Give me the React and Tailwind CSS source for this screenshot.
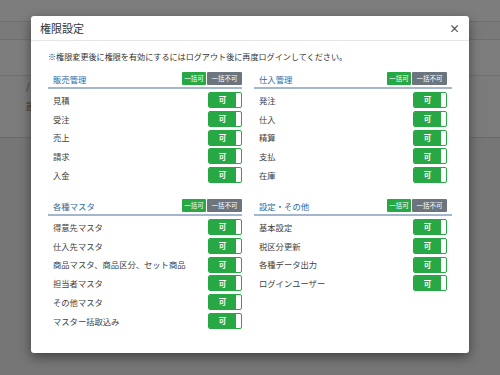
import React from "react";

const font = {fontFamily: '"Noto Sans CJK JP", "Noto Sans", sans-serif'};

const sections = [
	{title: "販売管理", items: ["見積", "受注", "売上", "請求", "入金"]},
	{title: "仕入管理", items: ["発注", "仕入", "精算", "支払", "在庫"]},
	{
		title: "各種マスタ",
		items: [
			"得意先マスタ",
			"仕入先マスタ",
			"商品マスタ、商品区分、セット商品",
			"担当者マスタ",
			"その他マスタ",
			"マスター括取込み",
		],
	},
	{title: "設定・その他", items: ["基本設定", "税区分更新", "各種データ出力", "ログインユーザー"]},
];

function Toggle() {
	return (
		<div className="flex h-[16px] w-[34px] overflow-hidden rounded-[2px] border border-[#28a745] bg-white">
			<div className="flex flex-1 items-center justify-center bg-[#28a745] text-[7.5px] font-bold leading-none text-white">
				可
			</div>
			<div className="w-[5px]" />
		</div>
	);
}

function Section({title, items, right}) {
	return (
		<div className="flex flex-col">
			<div className={`flex h-[17px] items-start justify-between border-b-2 border-[#a3b6cb] pl-[5px] ${right ? "pr-[5px]" : ""}`}>
				<span className="mt-[1px] text-[8.4px] leading-[13px] text-[#2f68a4]">{title}</span>
				<div className="flex gap-[1px]">
					<span className="flex h-[13px] w-[24px] items-center justify-center rounded-[1px] bg-[#28a745] text-[6.5px] leading-none text-white">
						一括可
					</span>
					<span className="flex h-[13px] w-[35px] items-center justify-center rounded-[1px] bg-[#6c757d] text-[6.5px] leading-none text-white">
						一括不可
					</span>
				</div>
			</div>
			<div className={`mt-[3px] flex flex-col gap-[2.75px] pl-[5px] ${right ? "pr-[5px]" : ""}`}>
				{items.map((item) => (
					<div key={item} className="flex h-[16px] items-center justify-between">
						<span className="text-[8.3px] leading-none text-[#404040]">{item}</span>
						<Toggle />
					</div>
				))}
			</div>
		</div>
	);
}

export default function App() {
	return (
		<div className="relative h-[375px] w-[500px] overflow-hidden bg-[#767676]" style={font}>
			{/* page behind the overlay */}
			<div className="flex flex-col">
				<div className="h-[22px] border-b border-[#6e6e6e] bg-[#7d7d7d]" />
				<div className="h-[18px] border-b border-[#6e6e6e] bg-[#7a7a7a]" />
				<div className="h-[36px] border-b border-[#6e6e6e] bg-[#7d7d7d]" />
				<div className="flex h-[62px] flex-col gap-[6px] border-b border-[#6a6a6a] bg-[#7b7b7b] pl-[26px] pt-[4px] text-[9px] text-[#333]">
					<span>/</span>
					<span>設</span>
				</div>
			</div>

			{/* modal */}
			<div className="absolute left-[31px] top-[16px] flex h-[337px] w-[438px] flex-col rounded-[3px] bg-white shadow-[0_4px_12px_rgba(0,0,0,0.45)]">
				<div className="flex h-[25px] items-center justify-between border-b border-[#e6e6e6] pl-[9px] pr-[9px]">
					<span className="text-[11px] text-[#333]">権限設定</span>
					<span className="text-[11px] font-bold leading-none text-[#555]">×</span>
				</div>
				<div className="flex flex-col px-[17px] pt-[10px]">
					<p className="text-[8.1px] leading-[12px] text-[#333]">
						※権限変更後に権限を有効にするにはログアウト後に再度ログインしてください。
					</p>
					<div className="mt-[9px] grid grid-cols-[194px_198px] gap-x-[12px] gap-y-[16px]">
						<Section {...sections[0]} />
						<Section {...sections[1]} right />
						<Section {...sections[2]} />
						<Section {...sections[3]} right />
					</div>
				</div>
			</div>
		</div>
	);
}
